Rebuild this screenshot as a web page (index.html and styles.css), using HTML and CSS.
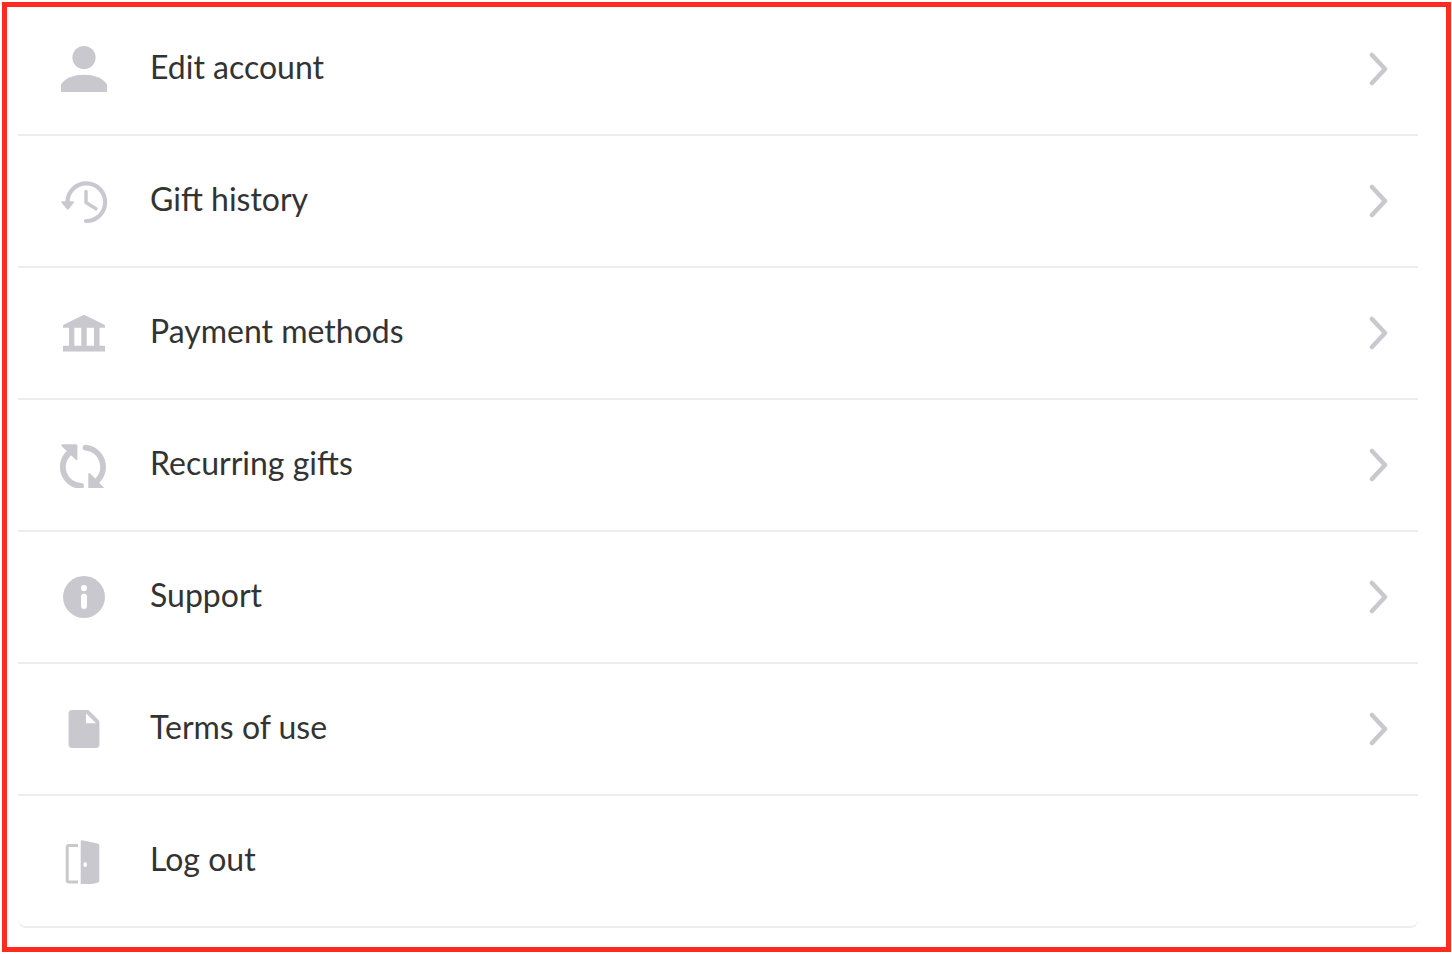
FILE: index.html
```
<!DOCTYPE html>
<html lang="en">

<head>
    <meta charset="UTF-8">
    <meta name="viewport" content="width=device-width, initial-scale=1.0">
    <title>Account</title>
    <link rel="stylesheet" href="styles.css">
</head>

<body>
    <nav class="frame" aria-label="Account">
        <ul class="menu">
            <li class="menu-item">
                <a class="menu-link" href="#edit-account">
                    <svg class="icon" viewBox="0 0 48 48" aria-hidden="true">
                        <circle cx="24" cy="12.5" r="11.6" />
                        <path d="M1 47V39.5C5 33 14 29.7 24 29.7S43 33 47 39.5V47z" />
                    </svg>
                    <span class="label">Edit account</span>
                    <svg class="chevron" viewBox="0 0 20 36" aria-hidden="true"><path d="M4 4l13 14L4 32" /></svg>
                </a>
            </li>
            <li class="menu-item">
                <a class="menu-link" href="#gift-history">
                    <svg class="icon" viewBox="0 0 48 48" aria-hidden="true">
                        <path class="line" stroke-width="4.2" d="M7.5 25A18.8 18.8 0 1 1 26 44" />
                        <path class="line" stroke-width="3.4" d="M26 14.5V25.5L36 31.7" />
                        <path d="M2.3 24.3H13.2Q14.6 24.5 13.8 25.8L8.8 32Q7.8 33 6.8 32L1.6 25.8Q.8 24.5 2.3 24.3z" />
                    </svg>
                    <span class="label">Gift history</span>
                    <svg class="chevron" viewBox="0 0 20 36" aria-hidden="true"><path d="M4 4l13 14L4 32" /></svg>
                </a>
            </li>
            <li class="menu-item">
                <a class="menu-link" href="#payment-methods">
                    <svg class="icon" viewBox="0 0 48 48" aria-hidden="true">
                        <path d="M24 5.7L44 15.5Q45 16 45 17V18.7H39.5V36.7H45V42.6H3V36.7H9V18.7H3V17Q3 16 4 15.5z
                            M14.3 18.7V36.7H21.3V18.7z M26.7 18.7V36.7H34V18.7z" fill-rule="evenodd" />
                    </svg>
                    <span class="label">Payment methods</span>
                    <svg class="chevron" viewBox="0 0 20 36" aria-hidden="true"><path d="M4 4l13 14L4 32" /></svg>
                </a>
            </li>
            <li class="menu-item">
                <a class="menu-link" href="#recurring-gifts">
                    <svg class="icon" viewBox="0 0 48 48" aria-hidden="true">
                        <clipPath id="sync-clip"><rect width="48" height="47" /></clipPath>
                        <g clip-path="url(#sync-clip)">
                            <path class="line" stroke-width="5.8" d="M9 12A19 19 0 0 0 21 45" />
                            <path class="line" stroke-width="5.8" d="M25.5 6.6A19.4 19.4 0 0 1 37 40" />
                            <path d="M2.3 3.3H16Q17.4 3.3 17.4 4.8V18.2Q17 19.8 15.8 18.8L1.5 5Q.8 3.6 2.3 3.3z" />
                            <path d="M28.3 47V33Q28.6 31.2 30 32.3L44.2 47z" />
                        </g>
                    </svg>
                    <span class="label">Recurring gifts</span>
                    <svg class="chevron" viewBox="0 0 20 36" aria-hidden="true"><path d="M4 4l13 14L4 32" /></svg>
                </a>
            </li>
            <li class="menu-item">
                <a class="menu-link" href="#support">
                    <svg class="icon" viewBox="0 0 48 48" aria-hidden="true">
                        <circle cx="24" cy="24" r="21" />
                        <circle class="hole" cx="24" cy="15" r="3.1" />
                        <rect class="hole" x="21" y="20.7" width="6" height="15.4" rx="3" />
                    </svg>
                    <span class="label">Support</span>
                    <svg class="chevron" viewBox="0 0 20 36" aria-hidden="true"><path d="M4 4l13 14L4 32" /></svg>
                </a>
            </li>
            <li class="menu-item">
                <a class="menu-link" href="#terms">
                    <svg class="icon" viewBox="0 0 48 48" aria-hidden="true">
                        <path d="M12.3 5H27.5Q28.5 5 29.3 5.8L38.7 15.3Q39.4 16 39.4 17V39.5Q39.4 43 35.9 43H12.3Q8.6 43 8.6 39.5V8.5Q8.6 5 12.3 5z
                            M26 8.2V18.3H36.2z" fill-rule="evenodd" />
                    </svg>
                    <span class="label">Terms of use</span>
                    <svg class="chevron" viewBox="0 0 20 36" aria-hidden="true"><path d="M4 4l13 14L4 32" /></svg>
                </a>
            </li>
            <li class="menu-item">
                <a class="menu-link" href="#log-out">
                    <svg class="icon" viewBox="0 0 48 48" aria-hidden="true">
                        <path class="line door-frame" stroke-width="3" d="M18 8.4H9Q7.2 8.4 7.2 10.2V43.2Q7.2 45 9 45H18" />
                        <path d="M20.7 4.5Q20.7 3 22.2 3.2L37.5 6.5Q39.3 7 39.3 8.7V43.5Q39.3 45.3 37.5 45.8Q34 47 30 47H20.7z" />
                        <ellipse class="hole" cx="25.2" cy="27.7" rx="1.8" ry="2.4" />
                    </svg>
                    <span class="label">Log out</span>
                </a>
            </li>
        </ul>
    </nav>
</body>

</html>
```
FILE: styles.css
```
* {
    box-sizing: border-box;
}

body {
    margin: 0;
    background: #fff;
    color: #333;
    font-family: Lato, "Open Sans", sans-serif;
    font-size: 32px;
    line-height: 40px;
}

.frame {
    margin: 2px 1px 2px 2px;
    padding: 2px 33px 24px 16px;
    outline: 5px solid #ff2b20;
    outline-offset: -5px;
}

.menu {
    margin: 0;
    padding: 0;
    list-style: none;
}

.menu-item {
    border-bottom: 2px solid #ededee;
}

.menu-item:last-child {
    border-radius: 0 0 8px 8px;
}

.menu-link {
    display: flex;
    align-items: center;
    gap: 42px;
    min-height: 130px;
    padding: 0 30px 0 42px;
    color: inherit;
    text-decoration: none;
}

.icon {
    flex: none;
    width: 48px;
    height: 48px;
    fill: #c8c8ce;
}

.line {
    fill: none;
    stroke: #c8c8ce;
    stroke-linecap: round;
    stroke-linejoin: round;
}

.door-frame {
    stroke-linecap: butt;
}

.hole {
    fill: #fff;
}

.label {
    flex: 1;
    padding-bottom: 4px;
}

.chevron {
    flex: none;
    width: 20px;
    height: 36px;
    fill: none;
    stroke: #c8c8ce;
    stroke-width: 4.5;
    stroke-linecap: round;
    stroke-linejoin: round;
}
```
